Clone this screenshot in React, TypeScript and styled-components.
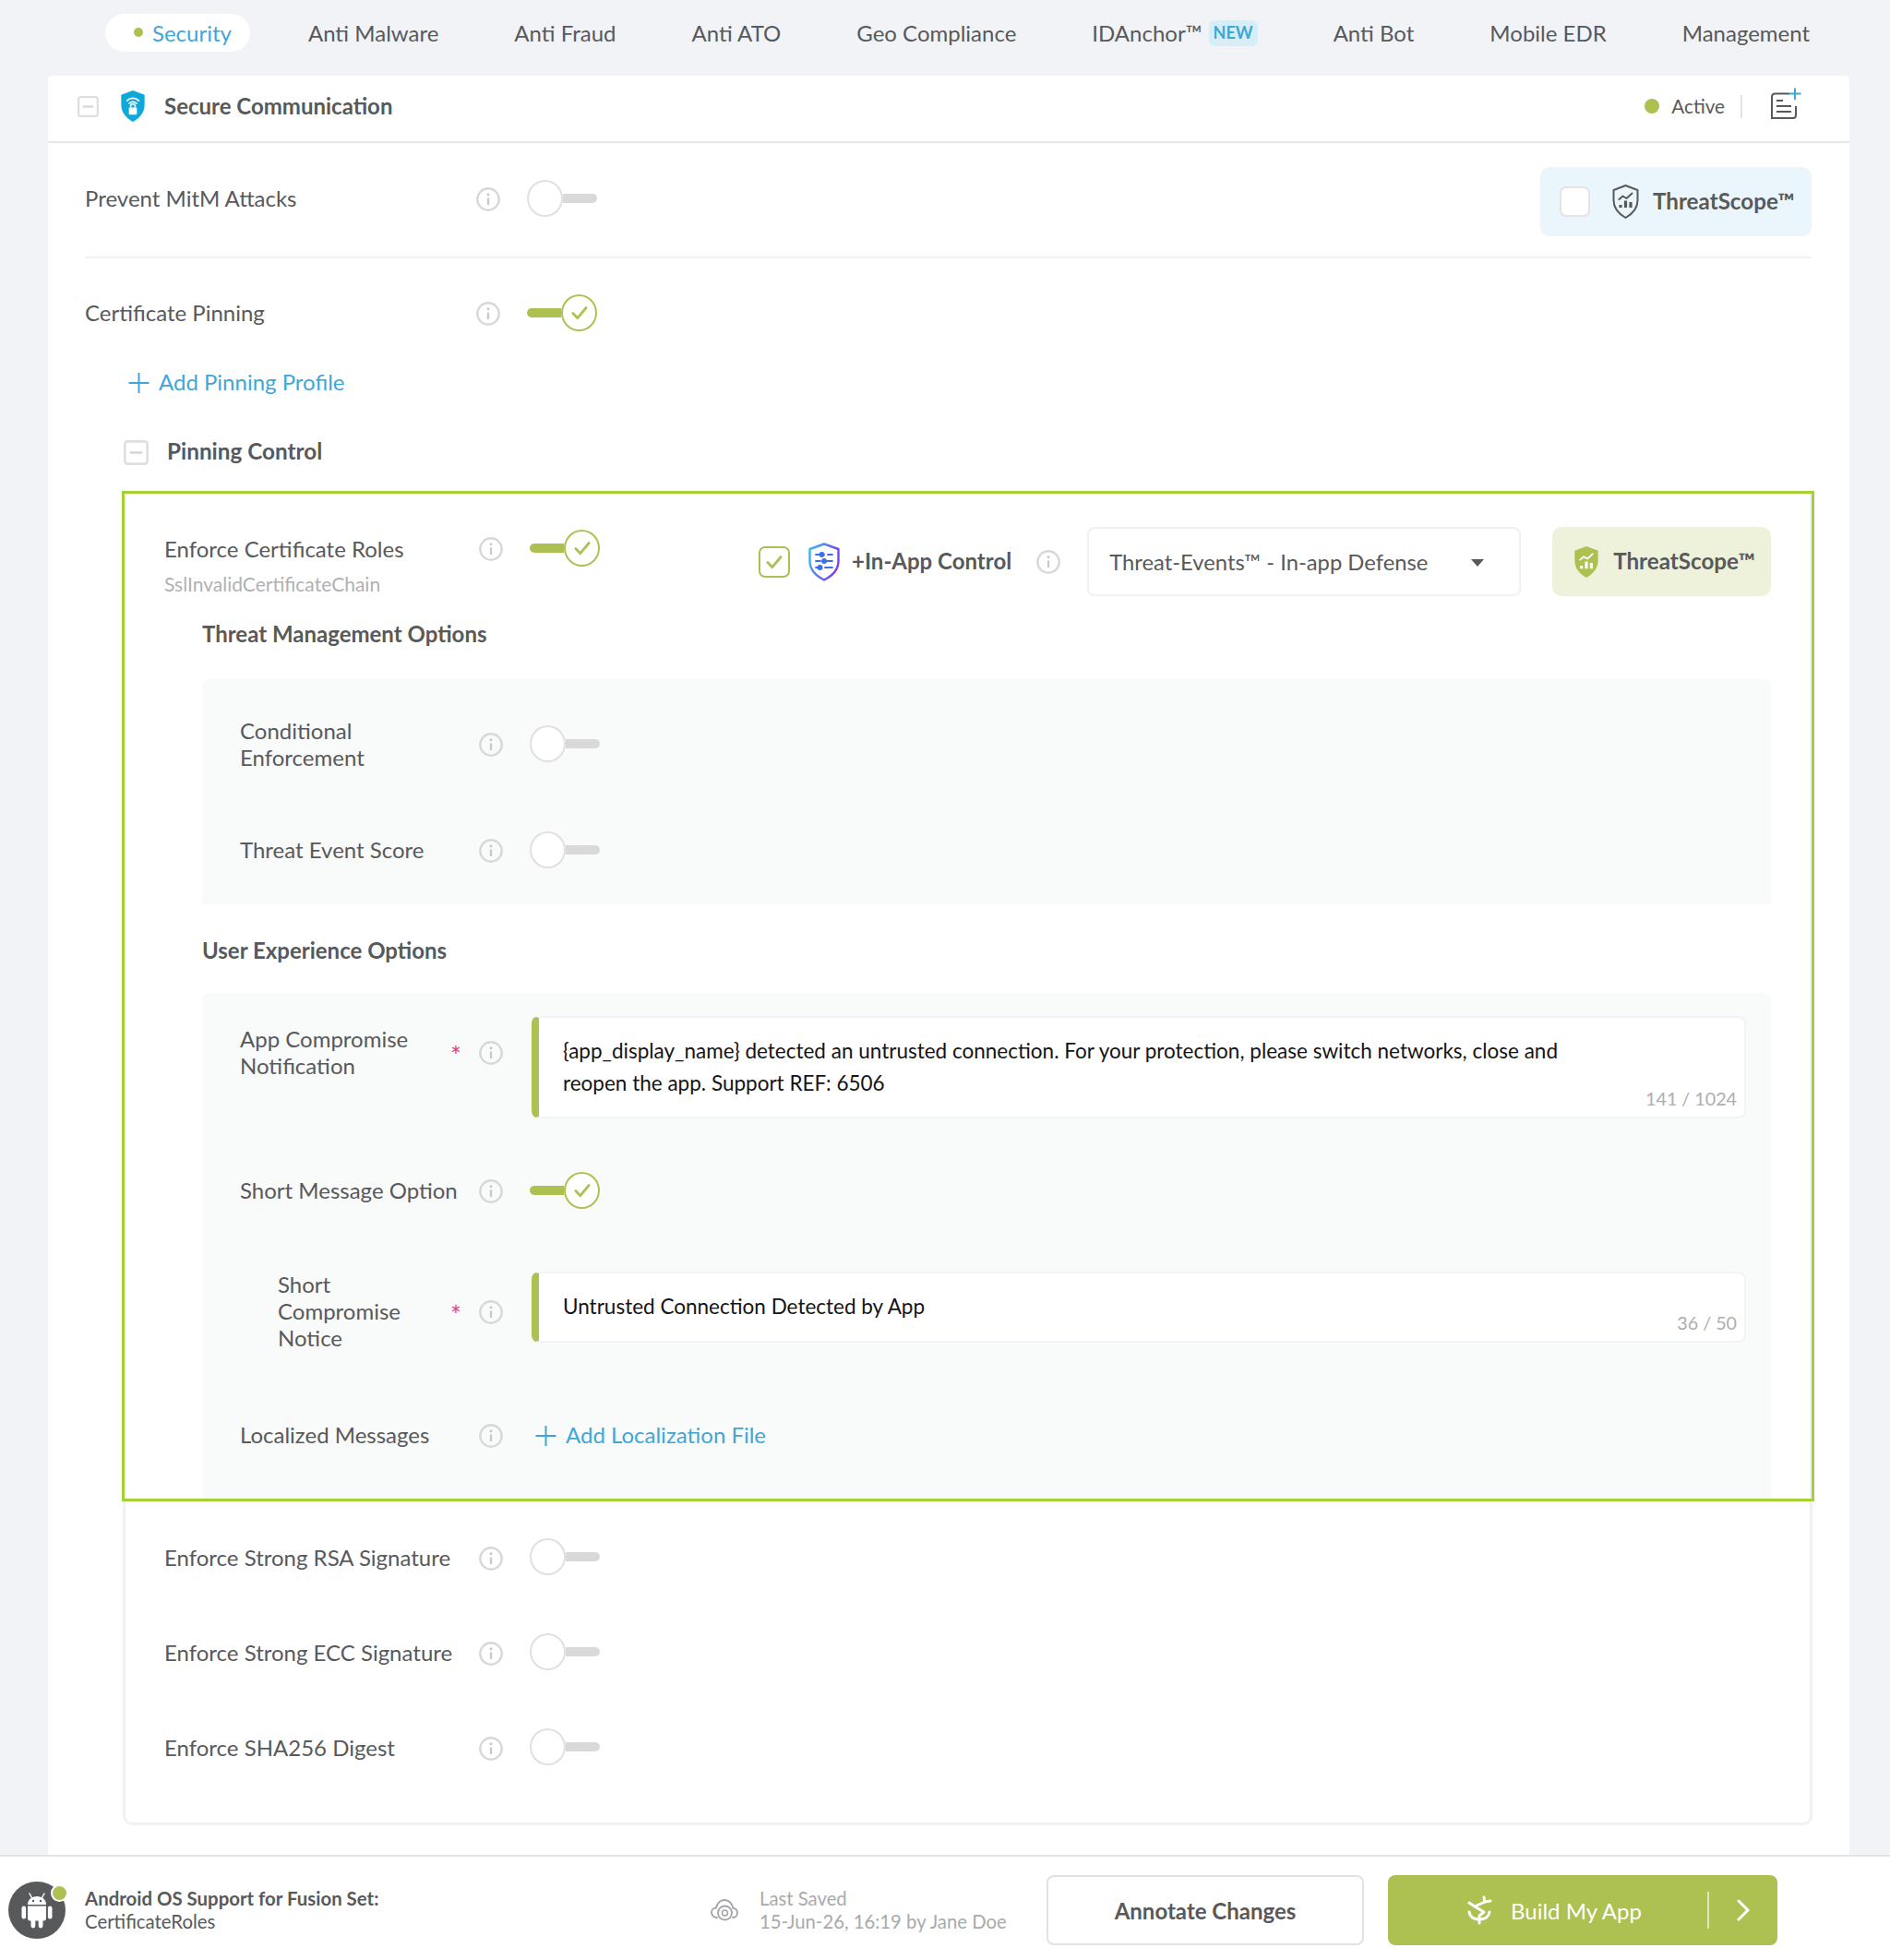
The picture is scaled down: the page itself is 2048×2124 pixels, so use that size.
import React from 'react';
import styled, { createGlobalStyle } from 'styled-components';

const GREEN = '#adc152';
const BLUE = '#3fa7d6';
const TEXT = '#58595b';

const Global = createGlobalStyle`
  html, body { margin: 0; padding: 0; background: #f1f3f7; }
  body { font-family: Lato, "Open Sans", sans-serif; font-size: 24px; color: ${TEXT}; }
  * { box-sizing: border-box; }
`;

const Page = styled.div`
  width: 2048px; height: 2124px; display: flex; flex-direction: column; background: #f1f3f7; overflow: hidden;
`;
const Nav = styled.nav`
  height: 82px; flex: none; display: flex; align-items: flex-start; padding: 15px 0 0 114px; gap: 42px;
`;
const Tab = styled.div<{ $active?: boolean }>`
  height: 41px; display: flex; align-items: center; padding: 0 20px 0 ${p => (p.$active ? 31 : 20)}px;
  border-radius: 21px; white-space: nowrap; line-height: 41px;
  background: ${p => (p.$active ? '#fff' : 'transparent')};
  color: ${p => (p.$active ? BLUE : TEXT)};
  margin-right: ${p => (p.$active ? 1 : 0)}px;
`;
const TabDot = styled.span`
  width: 10px; height: 10px; border-radius: 50%; background: ${GREEN}; margin-right: 10px; margin-top: -2px;
`;
const NewBadge = styled.span`
  margin-left: 7px; width: 53px; height: 28px; border-radius: 6px; background: #d8eef7; color: ${BLUE};
  font-size: 18px; font-weight: 700; display: flex; align-items: center; justify-content: center;
`;

const Main = styled.main`
  flex: 1; margin: 0 44px 0 52px; background: #fff; border-radius: 4px 4px 0 0; display: flex; flex-direction: column;
`;
const CardHeader = styled.header`
  height: 73px; flex: none; border-bottom: 2px solid #e6e7e9; display: flex; align-items: center; padding: 0 52px 5px 32px;
`;
const HeaderTitle = styled.h1`
  margin: 0 0 0 18px; font-size: 24px; font-weight: 700; line-height: 34px;
`;
const ShieldSlot = styled.span<{ $ml?: number }>`
  display: flex; margin-left: ${p => p.$ml ?? 0}px; flex: none;
`;
const HeaderRight = styled.div`
  margin-left: auto; display: flex; align-items: center;
`;
const StatusDot = styled.span`
  width: 16px; height: 16px; border-radius: 50%; background: ${GREEN}; margin-right: 13px;
`;
const StatusText = styled.span`
  font-size: 20.7px; line-height: 30px;
`;
const VBar = styled.span`
  width: 2px; height: 25px; background: #e3e3e3; margin: 0 30px 0 17px;
`;
const NoteSlot = styled.span`
  display: flex; margin-bottom: 6px;
`;

const Body = styled.div`
  padding: 0 41px 0 40px; flex: 1; display: flex; flex-direction: column;
`;
const TopRow = styled.div`
  height: 125px; flex: none; border-bottom: 2px solid #eef2f6; padding-top: 26px; display: flex; justify-content: space-between; align-items: flex-start;
`;
const LeftLine = styled.div<{ $h?: number; $pl?: number }>`
  display: flex; align-items: center; height: ${p => p.$h ?? 70}px; padding-left: ${p => p.$pl ?? 0}px; flex: none;
`;
const RowLabel = styled.div<{ $w: number; $indent?: number }>`
  width: ${p => p.$w}px; flex: none; line-height: 29px; padding-left: ${p => p.$indent ?? 0}px; white-space: nowrap; margin-top: -3px;
`;
const InfoSlot = styled.span<{ $mr?: number }>`
  display: flex; flex: none; margin-right: ${p => p.$mr ?? 29}px;
`;

const ToggleWrap = styled.span<{ $on?: boolean }>`
  position: relative; display: flex; align-items: center; width: 76px; height: 40px; flex: none; margin-bottom: 3px;
  flex-direction: ${p => (p.$on ? 'row' : 'row-reverse')};
`;
const ToggleTrack = styled.span<{ $on?: boolean }>`
  width: 38px; height: 10px; background: ${p => (p.$on ? GREEN : '#d9d9d9')};
  border-radius: ${p => (p.$on ? '5px 0 0 5px' : '0 5px 5px 0')};
`;
const ToggleKnob = styled.span<{ $on?: boolean }>`
  width: 39px; height: 40px; border-radius: 50%; background: #fff; flex: none; display: flex; align-items: center; justify-content: center;
  border: 2px solid ${p => (p.$on ? GREEN : '#e0e0e0')};
`;

const ScopeBox = styled.div<{ $active?: boolean }>`
  display: flex; align-items: center; height: 75px; border-radius: 10px; flex: none;
  background: ${p => (p.$active ? '#eef2da' : '#eaf6fb')};
  width: ${p => (p.$active ? 237 : 294)}px; padding-left: ${p => (p.$active ? 22 : 21)}px;
`;
const EmptyCheck = styled.span`
  width: 33px; height: 33px; border: 2px solid #e4e4e4; border-radius: 7px; background: #fff; margin-right: 23px; flex: none;
`;
const ScopeText = styled.span<{ $ml: number }>`
  font-weight: 700; margin: -2px 0 0 ${p => p.$ml}px; white-space: nowrap; font-size: 24.2px;
`;

const AddLink = styled.div<{ $ml: number }>`
  display: flex; align-items: center; color: ${BLUE}; margin-left: ${p => p.$ml}px; height: 30px; flex: none; white-space: nowrap;
`;
const AddText = styled.span`
  margin: -3px 0 0 10px;
`;
const CollapseRow = styled.div`
  margin: 46px 0 0 42px; display: flex; align-items: center; height: 28px; flex: none;
`;
const CollapseTitle = styled.h2`
  margin: -2px 0 0 20px; font-size: 24.3px; font-weight: 700; line-height: 28px;
`;
const GroupBox = styled.section`
  margin: 28px -1px 0 41px; height: 1446px; flex: none; border: 3px solid #eef2f6; border-top: none; border-radius: 0 0 10px 10px;
`;
const Highlight = styled.div`
  margin: 0 -5px 0 -4px; height: 1095px; border: 3px solid #a5d133; display: flex; flex-direction: column;
`;
const EnforceRow = styled.div`
  margin-top: 36px; height: 75px; flex: none; display: flex; align-items: flex-start; padding: 0 43px 0 43px;
`;
const EnforceLabel = styled.div`
  width: 341px; flex: none; padding-top: 7px; line-height: 34px;
`;
const SubLabel = styled.div`
  font-size: 21px; color: #b0b1b3; margin-top: 4px; line-height: 34px;
`;
const InfoTop = styled.span<{ $mt: number }>`
  display: flex; flex: none; margin-top: ${p => p.$mt}px;
`;
const ToggleTop = styled.span`
  display: flex; flex: none; margin: 3px 0 0 29px;
`;
const ControlGroup = styled.div`
  margin-left: 172px; display: flex; align-items: center; height: 75px; flex: none;
`;
const GreenCheck = styled.span`
  width: 34px; height: 34px; border: 2px solid ${GREEN}; border-radius: 7px; display: flex; align-items: center; justify-content: center; flex: none;
`;
const ControlText = styled.span`
  font-weight: 700; margin: -3px 27px 0 12px; white-space: nowrap;
`;
const SelectBox = styled.div`
  width: 470px; height: 75px; flex: none; margin-left: 29px; margin-right: 34px; border: 2px solid #eef2f6; border-radius: 8px; background: #fff;
  display: flex; align-items: center; padding-left: 22px; position: relative; white-space: nowrap; font-size: 23.8px;
`;
const Caret = styled.span`
  position: absolute; left: 414px; top: 33px; width: 0; height: 0; border-left: 7px solid transparent; border-right: 7px solid transparent; border-top: 8px solid ${TEXT};
`;
const SectionTitle = styled.h3<{ $mt: number }>`
  margin: ${p => p.$mt}px 0 0 84px; font-size: 24px; font-weight: 700; line-height: 30px; flex: none;
`;
const Panel = styled.div<{ $mt: number; $h: number; $pt?: number }>`
  margin: ${p => p.$mt}px 44px 0 84px; height: ${p => p.$h}px; padding-top: ${p => p.$pt ?? 0}px; background: #f9fafa; border-radius: 8px 8px 0 0; flex: none; display: flex; flex-direction: column;
`;
const PanelRow = styled.div<{ $h: number; $start?: boolean }>`
  height: ${p => p.$h}px; flex: none; display: flex; padding-left: 41px; align-items: ${p => (p.$start ? 'flex-start' : 'center')};
`;
const LabelCol = styled.div<{ $mt?: number }>`
  width: 259px; flex: none; display: flex; margin-top: ${p => p.$mt ?? 0}px; position: relative;
`;
const Required = styled.span<{ $top: number }>`
  position: absolute; left: 228px; top: ${p => p.$top}px; color: #e5457d; font-size: 28px; line-height: 24px;
`;
const MessageField = styled.div<{ $h: number; $pt: number }>`
  position: relative; width: 1316px; height: ${p => p.$h}px; flex: none; margin-left: 31px; background: #fff; font-size: 22.5px;
  border: 2px solid #f0f3f7; border-left: 8px solid ${GREEN}; border-radius: 8px; padding: ${p => p.$pt}px 0 0 26px; color: #141414; line-height: 35px;
`;
const Counter = styled.span`
  position: absolute; right: 8px; bottom: 4px; font-size: 19.7px; color: #aeaeae; line-height: 30px;
`;
const PlainRow = styled.div<{ $mt?: number }>`
  height: 103px; display: flex; align-items: center; padding-left: 42px; margin-top: ${p => p.$mt ?? 0}px;
`;

const Footer = styled.footer`
  height: 114px; flex: none; background: #fff; border-top: 2px solid #e3e4e6; display: flex; align-items: center; padding: 4px 122px 0 9px;
`;
const Avatar = styled.div`
  position: relative; width: 62px; height: 62px; border-radius: 50%; background: ${TEXT}; display: flex; align-items: center; justify-content: center; flex: none;
`;
const AvatarDot = styled.span`
  position: absolute; right: -3px; top: 3px; width: 19px; height: 19px; border-radius: 50%; background: ${GREEN}; border: 2px solid #fff;
`;
const FooterText = styled.div`
  margin-left: 21px; font-size: 20.4px; line-height: 25px;
`;
const Bold = styled.div`
  font-weight: 700;
`;
const SaveBlock = styled.div`
  margin-left: auto; width: 364px; display: flex; align-items: center; color: #a9aaac; font-size: 20.3px; line-height: 25px; flex: none;
`;
const SaveText = styled.div`
  margin-left: 23px; white-space: nowrap;
`;
const GhostButton = styled.button`
  width: 344px; height: 76px; flex: none; background: #fff; border: 2px solid #e1e2e4; border-radius: 8px; font: 700 24px Lato, sans-serif; color: ${TEXT};
`;
const BuildButton = styled.button`
  width: 422px; height: 76px; flex: none; margin-left: 26px; background: ${GREEN}; border: none; border-radius: 8px; color: #fff; font: 400 24px Lato, sans-serif;
  display: flex; align-items: center; padding: 0 0 0 84px; position: relative;
`;
const BuildLabel = styled.span`
  margin-left: 19px; white-space: nowrap;
`;
const BuildDivider = styled.span`
  position: absolute; left: 346px; top: 18px; width: 2px; height: 40px; background: #dfe7b8;
`;
const BuildChevron = styled.span`
  position: absolute; left: 378px; top: 26px; display: flex;
`;

const Info = () => (
  <svg width="26" height="26" viewBox="0 0 26 26" fill="none">
    <circle cx="13" cy="13" r="11.7" stroke="#d8d8d8" strokeWidth="2.4" />
    <circle cx="13" cy="7.8" r="1.5" fill="#c8c8c8" />
    <path d="M13 11.5V19" stroke="#c8c8c8" strokeWidth="2.3" />
  </svg>
);
const Check = ({ size = 22 }: { size?: number }) => (
  <svg width={size} height={size} viewBox="0 0 20 20" fill="none">
    <path d="M3.5 10.5L8 15.2L16.5 5" stroke={GREEN} strokeWidth="2.5" strokeLinecap="round" strokeLinejoin="round" />
  </svg>
);
const Toggle = ({ on }: { on?: boolean }) => (
  <ToggleWrap $on={on}>
    <ToggleTrack $on={on} />
    <ToggleKnob $on={on}>{on && <Check />}</ToggleKnob>
  </ToggleWrap>
);
const Plus = () => (
  <svg width="23" height="24" viewBox="0 0 23 24" fill="none">
    <path d="M11.5 1V23M0.5 12H22.5" stroke={BLUE} strokeWidth="2" />
  </svg>
);
const MinusBox = ({ size }: { size: number }) => (
  <svg width={size} height={size} viewBox="0 0 24 24" fill="none">
    <rect x="1.2" y="1.2" width="21.6" height="21.6" rx="2.5" stroke="#dfdfdf" strokeWidth="2.4" fill="#fff" />
    <path d="M6 12H18" stroke="#d8d8d8" strokeWidth="2.4" />
  </svg>
);
const SHIELD = 'M15 1L28 6V17C28 26 22 32 15 36C8 32 2 26 2 17V6Z';
const SecureShield = () => (
  <svg width="32" height="36" viewBox="0 0 30 37" fill="none">
    <path d={SHIELD} fill="#0ea9d9" />
    <path d="M8.5 12.5C12 8.8 18 8.8 21.5 12.5M11 15.5C13.2 13.3 16.8 13.3 19 15.5" stroke="#fff" strokeWidth="1.8" strokeLinecap="round" />
    <rect x="10.5" y="20" width="9" height="8" rx="1.2" fill="#fff" />
    <path d="M12.5 20V18.5C12.5 15.5 17.5 15.5 17.5 18.5V20" stroke="#fff" strokeWidth="1.6" />
  </svg>
);
const ScopeOutline = () => (
  <svg width="31" height="37" viewBox="0 0 30 37" fill="none">
    <path d={SHIELD} stroke={TEXT} strokeWidth="2" strokeLinejoin="round" />
    <path d="M8 16L12 12.5L16 15L22 9.5" stroke={TEXT} strokeWidth="2" strokeLinecap="round" strokeLinejoin="round" />
    <path d="M9.5 25V22M15 25V17.5M20.5 25V19" stroke={TEXT} strokeWidth="3.2" />
  </svg>
);
const ScopeFilled = () => (
  <svg width="30" height="36" viewBox="0 0 30 37" fill="none">
    <path d={SHIELD} fill={GREEN} />
    <path d="M8 16L12 12.5L16 15L22 9.5" stroke="#fff" strokeWidth="1.8" strokeLinecap="round" strokeLinejoin="round" />
    <path d="M9.5 26V22.5M15 26V18M20.5 26V19.5" stroke="#fff" strokeWidth="3.2" />
  </svg>
);
const InAppShield = () => (
  <svg width="36" height="42" viewBox="0 0 36 42" fill="none">
    <defs>
      <linearGradient id="inapp" x1="0" y1="0" x2="1" y2="0.4">
        <stop offset="0" stopColor="#38bdf0" />
        <stop offset="1" stopColor="#7a3ff0" />
      </linearGradient>
    </defs>
    <path d="M18 1.5L33.5 7V20C33.5 30 26 36.5 18 40.5C10 36.5 2.5 30 2.5 20V7Z" stroke="url(#inapp)" strokeWidth="2.4" strokeLinejoin="round" />
    <path d="M9 13H18M22 13H27M9 20H14M20 20H27M9 27H13M19 27H27" stroke="#3f6fe8" strokeWidth="1.8" strokeLinecap="round" />
    <circle cx="15.5" cy="13" r="3" fill="#3f6fe8" />
    <circle cx="18" cy="20" r="3" fill="#3f6fe8" />
    <circle cx="13.5" cy="27" r="3" fill="#3f6fe8" />
  </svg>
);
const NoteIcon = () => (
  <svg width="34" height="34" viewBox="0 0 34 34" fill="none">
    <path d="M21 6.5H5.5C3.5 6.5 2 8 2 10V33H25C27 33 28 31.5 28 29.5V20" stroke={TEXT} strokeWidth="2" />
    <path d="M7 14H14M7 20H23M7 26H23" stroke={TEXT} strokeWidth="2" />
    <path d="M27 0.5V13M20.5 6.5H33.5" stroke={BLUE} strokeWidth="2" />
  </svg>
);
const CloudIcon = () => (
  <svg width="30" height="26" viewBox="0 0 30 26" fill="none">
    <path d="M7 21C3.5 21 1 18.5 1 15.5C1 12.5 3.3 10.6 6 10.5C6.8 5.5 10.5 2 15 2C20 2 23.4 5.8 24 10.5C26.8 10.8 29 13 29 16C29 18.8 27 21 24 21" stroke="#a3a4a7" strokeWidth="1.8" strokeLinecap="round" />
    <circle cx="15.5" cy="16" r="7.5" stroke="#a3a4a7" strokeWidth="1.8" fill="#fff" />
    <circle cx="15.5" cy="16" r="3" stroke="#a3a4a7" strokeWidth="1.6" />
  </svg>
);
const BuildIcon = () => (
  <svg width="30" height="32" viewBox="0 0 30 32" fill="none">
    <path d="M20 2L21 7L10 12L20 18L15 22V30" stroke="#fff" strokeWidth="3" strokeLinecap="round" strokeLinejoin="round" />
    <path d="M10 12L4 8M21 7L27 6M4 18C5 24 10 26 15 26C20 26 25 24 26 18" stroke="#fff" strokeWidth="3" strokeLinecap="round" strokeLinejoin="round" />
  </svg>
);
const Chevron = () => (
  <svg width="14" height="24" viewBox="0 0 14 24" fill="none">
    <path d="M2 2L12 12L2 22" stroke="#fff" strokeWidth="3" strokeLinecap="round" strokeLinejoin="round" />
  </svg>
);
const AndroidFigure = () => (
  <svg width="34" height="40" viewBox="0 0 34 40" fill="none">
    <path d="M7 14C7 8.5 11.5 5 17 5C22.5 5 27 8.5 27 14Z" fill="#fff" />
    <path d="M11.5 6.5L9 2M22.5 6.5L25 2" stroke="#fff" strokeWidth="1.5" strokeLinecap="round" />
    <circle cx="13" cy="10" r="1.2" fill={TEXT} />
    <circle cx="21" cy="10" r="1.2" fill={TEXT} />
    <path d="M7 15.5H27V29C27 30.5 26 31.5 24.5 31.5H9.5C8 31.5 7 30.5 7 29Z" fill="#fff" />
    <rect x="0.5" y="15.5" width="4.6" height="14" rx="2.3" fill="#fff" />
    <rect x="28.9" y="15.5" width="4.6" height="14" rx="2.3" fill="#fff" />
    <rect x="10.5" y="29" width="4.8" height="10.5" rx="2.4" fill="#fff" />
    <rect x="18.7" y="29" width="4.8" height="10.5" rx="2.4" fill="#fff" />
  </svg>
);

const tabs = ['Anti Malware', 'Anti Fraud', 'Anti ATO', 'Geo Compliance'];
const tabsAfter = ['Anti Bot', 'Mobile EDR', 'Management'];

const PlainToggleRow = ({ label, mt }: { label: string; mt?: number }) => (
  <PlainRow $mt={mt}>
    <RowLabel $w={341}>{label}</RowLabel>
    <InfoSlot><Info /></InfoSlot>
    <Toggle />
  </PlainRow>
);

export default function App() {
  return (
    <Page>
      <Global />
      <Nav>
        <Tab $active><TabDot />Security</Tab>
        {tabs.map(t => <Tab key={t}>{t}</Tab>)}
        <Tab>IDAnchor™<NewBadge>NEW</NewBadge></Tab>
        {tabsAfter.map(t => <Tab key={t}>{t}</Tab>)}
      </Nav>
      <Main>
        <CardHeader>
          <MinusBox size={23} />
          <ShieldSlot $ml={21}><SecureShield /></ShieldSlot>
          <HeaderTitle>Secure Communication</HeaderTitle>
          <HeaderRight>
            <StatusDot />
            <StatusText>Active</StatusText>
            <VBar />
            <NoteSlot><NoteIcon /></NoteSlot>
          </HeaderRight>
        </CardHeader>
        <Body>
          <TopRow>
            <LeftLine>
              <RowLabel $w={424}>Prevent MitM Attacks</RowLabel>
              <InfoSlot><Info /></InfoSlot>
              <Toggle />
            </LeftLine>
            <ScopeBox>
              <EmptyCheck />
              <ScopeOutline />
              <ScopeText $ml={14}>ThreatScope™</ScopeText>
            </ScopeBox>
          </TopRow>
          <LeftLine $h={120}>
            <RowLabel $w={424}>Certificate Pinning</RowLabel>
            <InfoSlot><Info /></InfoSlot>
            <Toggle on />
          </LeftLine>
          <AddLink $ml={47}><Plus /><AddText>Add Pinning Profile</AddText></AddLink>
          <CollapseRow>
            <MinusBox size={27} />
            <CollapseTitle>Pinning Control</CollapseTitle>
          </CollapseRow>
          <GroupBox>
            <Highlight>
              <EnforceRow>
                <EnforceLabel>
                  Enforce Certificate Roles
                  <SubLabel>SslInvalidCertificateChain</SubLabel>
                </EnforceLabel>
                <InfoTop $mt={11}><Info /></InfoTop>
                <ToggleTop><Toggle on /></ToggleTop>
                <ControlGroup>
                  <GreenCheck><Check /></GreenCheck>
                  <ShieldSlot $ml={19}><InAppShield /></ShieldSlot>
                  <ControlText>+In-App Control</ControlText>
                  <Info />
                  <SelectBox>
                    Threat-Events™ - In-app Defense
                    <Caret />
                  </SelectBox>
                  <ScopeBox $active>
                    <ScopeFilled />
                    <ScopeText $ml={14}>ThreatScope™</ScopeText>
                  </ScopeBox>
                </ControlGroup>
              </EnforceRow>
              <SectionTitle $mt={26}>Threat Management Options</SectionTitle>
              <Panel $mt={34} $h={244}>
                <PanelRow $h={142}>
                  <LabelCol><RowLabel $w={259}>Conditional<br />Enforcement</RowLabel></LabelCol>
                  <InfoSlot><Info /></InfoSlot>
                  <Toggle />
                </PanelRow>
                <PanelRow $h={88}>
                  <LabelCol><RowLabel $w={259}>Threat Event Score</RowLabel></LabelCol>
                  <InfoSlot><Info /></InfoSlot>
                  <Toggle />
                </PanelRow>
              </Panel>
              <SectionTitle $mt={35}>User Experience Options</SectionTitle>
              <Panel $mt={31} $h={548} $pt={25}>
                <PanelRow $h={111} $start>
                  <LabelCol $mt={13}>
                    <RowLabel $w={259}>App Compromise<br />Notification</RowLabel>
                    <Required $top={18}>*</Required>
                  </LabelCol>
                  <InfoTop $mt={27}><Info /></InfoTop>
                  <MessageField $h={111} $pt={18}>
                    {'{app_display_name}'} detected an untrusted connection. For your protection, please switch networks, close and<br />
                    reopen the app. Support REF: 6506
                    <Counter>141 / 1024</Counter>
                  </MessageField>
                </PanelRow>
                <PanelRow $h={158}>
                  <LabelCol><RowLabel $w={259}>Short Message Option</RowLabel></LabelCol>
                  <InfoSlot><Info /></InfoSlot>
                  <Toggle on />
                </PanelRow>
                <PanelRow $h={8} />
                <PanelRow $h={110} $start>
                  <LabelCol $mt={2}>
                    <RowLabel $w={259} $indent={41}>Short<br />Compromise<br />Notice</RowLabel>
                    <Required $top={33}>*</Required>
                  </LabelCol>
                  <InfoTop $mt={31}><Info /></InfoTop>
                  <MessageField $h={77} $pt={18}>
                    Untrusted Connection Detected by App
                    <Counter>36 / 50</Counter>
                  </MessageField>
                </PanelRow>
                <PanelRow $h={136}>
                  <LabelCol><RowLabel $w={259}>Localized Messages</RowLabel></LabelCol>
                  <InfoSlot $mr={35}><Info /></InfoSlot>
                  <AddLink $ml={0}><Plus /><AddText>Add Localization File</AddText></AddLink>
                </PanelRow>
              </Panel>
            </Highlight>
            <PlainToggleRow label="Enforce Strong RSA Signature" mt={10} />
            <PlainToggleRow label="Enforce Strong ECC Signature" />
            <PlainToggleRow label="Enforce SHA256 Digest" />
          </GroupBox>
        </Body>
      </Main>
      <Footer>
        <Avatar>
          <AndroidFigure />
          <AvatarDot />
        </Avatar>
        <FooterText>
          <Bold>Android OS Support for Fusion Set:</Bold>
          CertificateRoles
        </FooterText>
        <SaveBlock>
          <CloudIcon />
          <SaveText>Last Saved<br />15-Jun-26, 16:19 by Jane Doe</SaveText>
        </SaveBlock>
        <GhostButton>Annotate Changes</GhostButton>
        <BuildButton>
          <BuildIcon />
          <BuildLabel>Build My App</BuildLabel>
          <BuildDivider />
          <BuildChevron><Chevron /></BuildChevron>
        </BuildButton>
      </Footer>
    </Page>
  );
}
